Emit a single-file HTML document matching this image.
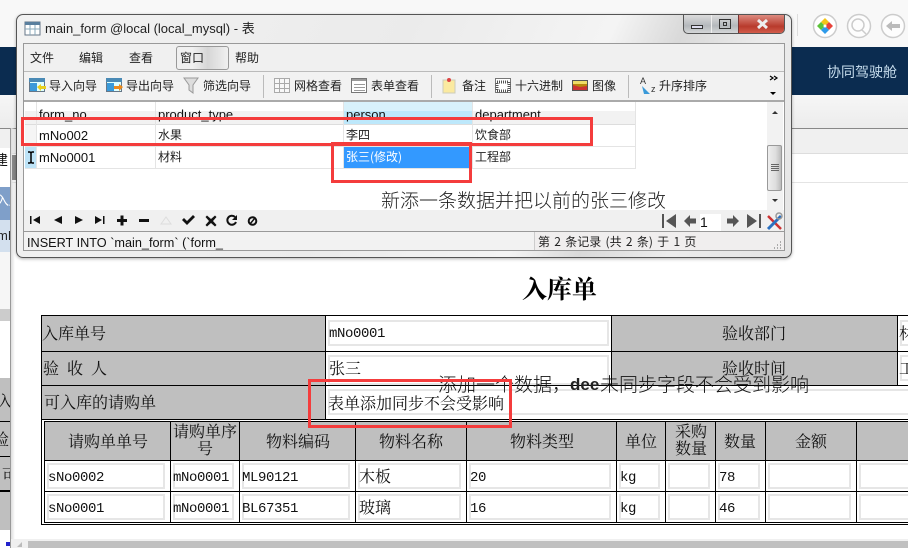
<!DOCTYPE html>
<html><head><meta charset="utf-8">
<style>
html,body{margin:0;padding:0;width:908px;height:548px;overflow:hidden;background:#fff}
*{box-sizing:border-box}
.a,.t,.m,.s,.g,.u,.i{position:absolute;white-space:nowrap}
.t{font:13px/16px "Liberation Sans","Noto Sans CJK SC",sans-serif;color:#111}
.u{font:12px/16px "Noto Sans CJK SC","Liberation Sans",sans-serif;color:#222}
.s{font:16px/20px "Liberation Serif","Noto Serif CJK SC",serif;color:#111}
.m{font:14px/20px "Liberation Mono",monospace;letter-spacing:-.4px;color:#111}
.g{background:#bfbfbf}
.i{border:2px solid #e6e6e6;background:#fff}
.k{position:absolute;background:#000}
.r{position:absolute;border:3px solid #f43c3c}
.c{text-align:center}
svg{position:absolute;overflow:visible}
</style></head><body>

<!-- backdrop -->
<div class="a" style="left:0;top:0;width:908px;height:47px;background:#f8f8f8"></div>
<div class="a" style="left:0;top:47px;width:908px;height:48px;background:#0b2c50"></div>
<div class="a" style="left:0;top:95px;width:908px;height:33px;background:linear-gradient(#f6f6f6,#ececec)"></div>
<div class="a" style="left:0;top:128px;width:908px;height:1px;background:#888"></div>
<div class="a" style="left:0;top:129px;width:908px;height:24px;background:#f0f0f0"></div>
<div class="a" style="left:0;top:153px;width:908px;height:1px;background:#ddd"></div>
<div class="a" style="left:0;top:182px;width:908px;height:1px;background:#e4e4e4"></div>
<div class="u" style="left:827px;top:62px;font-size:14px;line-height:20px;color:#c6dcec">协同驾驶舱</div>
<div class="a" style="left:797px;top:14px;width:1px;height:22px;background:#ddd"></div>
<svg style="left:0;top:0" width="908" height="60">
<circle cx="825" cy="26" r="11.500" fill="#fff" stroke="#ccc" stroke-width="1.500"/>
<path d="M825 18l4 4-4 4-4-4z" fill="#f5c518"/><path d="M829 22l4 4-4 4-4-4z" fill="#e8423a"/><path d="M821 22l4 4-4 4-4-4z" fill="#5cc43a"/><path d="M825 26l4 4-4 4-4-4z" fill="#2f9bea"/><circle cx="825" cy="26" r="1.500" fill="#fff"/>
<circle cx="859" cy="26" r="11.500" fill="#fdfdfd" stroke="#ccc" stroke-width="1.500"/><circle cx="858" cy="25" r="6" fill="none" stroke="#ccc" stroke-width="1.500"/><path d="M862 30l4 4" stroke="#ccc" stroke-width="1.500"/>
<circle cx="893" cy="26" r="11.500" fill="#fdfdfd" stroke="#ccc" stroke-width="1.500"/><path d="M886 26l6-5v3h8v4h-8v3z" fill="#bbb"/>
</svg>

<!-- left sliver -->
<div class="a" style="left:0;top:148px;width:11px;height:39px;background:#fff"></div>
<div class="u" style="left:-6px;top:150px;font-size:14px;line-height:20px;color:#111">建</div>
<div class="a" style="left:0;top:187px;width:11px;height:33px;background:#7f9fc9;overflow:hidden"><div class="u" style="left:-4px;top:5px;font-size:13px;color:#fff">入库</div></div>
<div class="a" style="left:0;top:220px;width:11px;height:32px;background:#d3e0ee;overflow:hidden"><div class="t" style="left:-3px;top:8px;color:#222">mN</div></div>
<div class="a" style="left:0;top:309px;width:11px;height:12px;background:#ccc"></div>
<div class="a" style="left:0;top:252px;width:11px;height:57px;background:#f6f6f6"></div>
<div class="g" style="left:0;top:378px;width:11px;height:112px"></div>
<div class="a" style="left:0;top:421px;width:11px;height:1px;background:#000"></div>
<div class="a" style="left:0;top:456px;width:11px;height:1px;background:#000"></div>
<div class="s" style="left:-3px;top:393px">入</div>
<div class="s" style="left:-7px;top:431px">验</div>
<div class="s" style="left:2px;top:467px">可</div>
<div class="a" style="left:0;top:490px;width:11px;height:2px;background:#000"></div>
<div class="g" style="left:0;top:492px;width:11px;height:38px"></div>
<div class="a" style="left:0;top:530px;width:11px;height:18px;background:#fff"></div>
<div class="a" style="left:6px;top:542px;width:5px;height:4px;background:#22c"></div>
<div class="a" style="left:10px;top:128px;width:1px;height:420px;background:#999"></div>
<div class="a" style="left:11px;top:183px;width:897px;height:365px;background:#fff"></div>
<div class="a" style="left:11px;top:128px;width:4px;height:420px;background:linear-gradient(90deg,#ddd,#fff0)"></div>
<div class="a" style="left:12px;top:155px;width:4px;height:25px;background:#888"></div>

<!-- bottom scrollbar -->
<div class="a" style="left:11px;top:539px;width:897px;height:9px;background:#f0f0f0"></div>
<div class="a" style="left:28px;top:541px;width:880px;height:7px;background:#c0c0c0"></div>
<svg style="left:0;top:0" width="30" height="548"><path d="M22 542l-5 5h5z" fill="#bbb"/></svg>

<!-- form -->
<div class="s" style="left:522px;top:277px;font-size:25px;line-height:28px;font-weight:bold;color:#000">入库单</div>
<div class="g" style="left:41px;top:315px;width:284px;height:104px"></div>
<div class="g" style="left:611px;top:315px;width:286px;height:70px"></div>
<div class="g" style="left:44px;top:421px;width:864px;height:39px"></div>

<div class="i" style="left:328px;top:320px;width:281px;height:26px"></div>
<div class="i" style="left:328px;top:355px;width:281px;height:30px"></div>
<div class="i" style="left:328px;top:389px;width:590px;height:26px"></div>
<div class="i" style="left:900px;top:320px;width:20px;height:26px"></div>
<div class="i" style="left:900px;top:355px;width:20px;height:26px"></div>
<div class="i" style="left:47px;top:463px;width:118px;height:26px"></div><div class="i" style="left:47px;top:494px;width:118px;height:26px"></div>
<div class="i" style="left:173px;top:463px;width:61px;height:26px"></div><div class="i" style="left:173px;top:494px;width:61px;height:26px"></div>
<div class="i" style="left:242px;top:463px;width:108px;height:26px"></div><div class="i" style="left:242px;top:494px;width:108px;height:26px"></div>
<div class="i" style="left:358px;top:463px;width:103px;height:26px"></div><div class="i" style="left:358px;top:494px;width:103px;height:26px"></div>
<div class="i" style="left:469px;top:463px;width:142px;height:26px"></div><div class="i" style="left:469px;top:494px;width:142px;height:26px"></div>
<div class="i" style="left:619px;top:463px;width:41px;height:26px"></div><div class="i" style="left:619px;top:494px;width:41px;height:26px"></div>
<div class="i" style="left:668px;top:463px;width:42px;height:26px"></div><div class="i" style="left:668px;top:494px;width:42px;height:26px"></div>
<div class="i" style="left:718px;top:463px;width:42px;height:26px"></div><div class="i" style="left:718px;top:494px;width:42px;height:26px"></div>
<div class="i" style="left:768px;top:463px;width:83px;height:26px"></div><div class="i" style="left:768px;top:494px;width:83px;height:26px"></div>
<div class="i" style="left:859px;top:463px;width:60px;height:26px"></div><div class="i" style="left:859px;top:494px;width:60px;height:26px"></div>

<!-- form lines -->
<div class="k" style="left:41px;top:315px;width:867px;height:1px"></div>
<div class="k" style="left:41px;top:351px;width:867px;height:1px"></div>
<div class="k" style="left:41px;top:385px;width:867px;height:1px"></div>
<div class="k" style="left:41px;top:419px;width:867px;height:1px"></div>
<div class="k" style="left:44px;top:421px;width:864px;height:1px"></div>
<div class="k" style="left:44px;top:460px;width:864px;height:1px"></div>
<div class="k" style="left:44px;top:491px;width:864px;height:1px"></div>
<div class="k" style="left:44px;top:522px;width:864px;height:1px"></div>
<div class="k" style="left:41px;top:524px;width:867px;height:1px"></div>
<div class="k" style="left:41px;top:315px;width:1px;height:210px"></div>
<div class="k" style="left:44px;top:421px;width:1px;height:102px"></div>
<div class="k" style="left:325px;top:315px;width:1px;height:104px"></div>
<div class="k" style="left:611px;top:315px;width:1px;height:70px"></div>
<div class="k" style="left:897px;top:315px;width:1px;height:70px"></div>
<div class="k" style="left:170px;top:421px;width:1px;height:102px"></div>
<div class="k" style="left:239px;top:421px;width:1px;height:102px"></div>
<div class="k" style="left:355px;top:421px;width:1px;height:102px"></div>
<div class="k" style="left:466px;top:421px;width:1px;height:102px"></div>
<div class="k" style="left:616px;top:421px;width:1px;height:102px"></div>
<div class="k" style="left:665px;top:421px;width:1px;height:102px"></div>
<div class="k" style="left:715px;top:421px;width:1px;height:102px"></div>
<div class="k" style="left:765px;top:421px;width:1px;height:102px"></div>
<div class="k" style="left:856px;top:421px;width:1px;height:102px"></div>

<!-- form text -->
<div class="s" style="left:42px;top:325px">入库单号</div>
<div class="s" style="left:43px;top:360px">验&nbsp;&nbsp;收&nbsp;&nbsp;人</div>
<div class="s" style="left:44px;top:394px">可入库的请购单</div>
<div class="m" style="left:329px;top:324px">mNo0001</div>
<div class="s" style="left:329px;top:360px">张三</div>
<div class="s" style="left:328px;top:395px">表单添加同步不会受影响</div>
<div class="s" style="left:722px;top:325px">验收部门</div>
<div class="s" style="left:722px;top:360px">验收时间</div>
<div class="s" style="left:899px;top:325px">材</div>
<div class="s" style="left:899px;top:360px">工</div>

<div class="s" style="left:68px;top:433px">请购单单号</div>
<div class="s" style="left:173px;top:424px;line-height:17px;width:64px;text-align:center;white-space:normal">请购单序号</div>
<div class="s" style="left:266px;top:433px">物料编码</div>
<div class="s" style="left:379px;top:433px">物料名称</div>
<div class="s" style="left:510px;top:433px">物料类型</div>
<div class="s" style="left:625px;top:433px">单位</div>
<div class="s" style="left:675px;top:424px;line-height:17px">采购<br>数量</div>
<div class="s" style="left:724px;top:433px">数量</div>
<div class="s" style="left:795px;top:433px">金额</div>

<div class="m" style="left:48px;top:468px">sNo0002</div><div class="m" style="left:48px;top:499px">sNo0001</div>
<div class="m" style="left:173px;top:468px">mNo0001</div><div class="m" style="left:173px;top:499px">mNo0001</div>
<div class="m" style="left:242px;top:468px">ML90121</div><div class="m" style="left:242px;top:499px">BL67351</div>
<div class="s" style="left:359px;top:468px">木板</div><div class="s" style="left:359px;top:499px">玻璃</div>
<div class="m" style="left:470px;top:468px">20</div><div class="m" style="left:470px;top:499px">16</div>
<div class="m" style="left:620px;top:468px">kg</div><div class="m" style="left:620px;top:499px">kg</div>
<div class="m" style="left:719px;top:468px">78</div><div class="m" style="left:719px;top:499px">46</div>

<div class="s" style="left:438px;top:373px;font-size:19px;line-height:22px;font-family:'Noto Sans CJK SC','Liberation Sans',sans-serif;font-weight:300">添加一个数据，</div>
<div class="t" style="left:570px;top:374px;font-size:17px;line-height:22px;font-weight:bold;color:#222">dee</div>
<div class="s" style="left:600px;top:373px;font-size:19px;line-height:22px;font-family:'Noto Sans CJK SC','Liberation Sans',sans-serif;font-weight:300">未同步字段不会受到影响</div>

<!-- window -->
<div class="a" style="left:16px;top:14px;width:776px;height:244px;border:1px solid #555;border-radius:7px;background:linear-gradient(115deg,#f2f2f2 0%,#ebebeb 45%,#f4f4f4 68%,#d9d9d9 76%,#ececec 86%,#e4e4e4 100%);box-shadow:0 1px 3px rgba(0,0,0,.3)"></div>
<svg style="left:0;top:0" width="60" height="40"><rect x="25" y="22" width="15" height="13" fill="#fff" stroke="#678"/><rect x="25" y="22" width="15" height="3" fill="#5a7f9e"/><path d="M25 29h15M30 25v10M35 25v10" stroke="#8ab"/></svg>
<div class="u" style="left:45px;top:21px;font-size:13px;line-height:16px;font-family:'Liberation Sans','Noto Sans CJK SC',sans-serif">main_form @local (local_mysql) - 表</div>

<!-- controls -->
<div class="a" style="left:683px;top:15px;width:102px;height:19px;border:1px solid #555;border-top:0;border-radius:0 0 5px 5px;background:linear-gradient(#dcdcdc,#b4b8bc 60%,#d4d6d8);overflow:hidden">
<div class="a" style="left:27px;top:0;width:1px;height:19px;background:#eee"></div>
<div class="a" style="left:54px;top:0;width:46px;height:19px;background:linear-gradient(#dd8b80,#b83a2c 60%,#d6614f);border-left:1px solid #733"></div>
</div>
<div class="a" style="left:691px;top:25px;width:12px;height:4px;border:1px solid #333;background:#dde"></div>
<div class="a" style="left:719px;top:19px;width:12px;height:10px;border:1px solid #333"><div class="a" style="left:3px;top:2px;width:4px;height:4px;border:1px solid #333"></div></div>
<svg style="left:0;top:0" width="800" height="40"><path d="M758 20l9 8M767 20l-9 8" stroke="#eee" stroke-width="3"/></svg>

<!-- client -->
<div class="a" style="left:23px;top:43px;width:762px;height:208px;border:1px solid #999;background:#f0f0f0"></div>
<div class="a" style="left:24px;top:71px;width:760px;height:1px;background:#bbb"></div>
<div class="a" style="left:24px;top:72px;width:760px;height:28px;background:#f2f2f2"></div>
<div class="a" style="left:24px;top:100px;width:760px;height:2px;background:#aaa"></div>

<div class="u" style="left:30px;top:50px">文件</div>
<div class="u" style="left:79px;top:50px">编辑</div>
<div class="u" style="left:129px;top:50px">查看</div>
<div class="a" style="left:176px;top:46px;width:53px;height:24px;border:1px solid #999;border-radius:3px;background:linear-gradient(90deg,#f0f0f0 30%,#d6d6d6 60%,#f0f0f0)"></div>
<div class="u" style="left:180px;top:50px">窗口</div>
<div class="u" style="left:235px;top:50px">帮助</div>

<div class="u" style="left:49px;top:78px">导入向导</div>
<div class="u" style="left:126px;top:78px">导出向导</div>
<div class="u" style="left:203px;top:78px">筛选向导</div>
<div class="u" style="left:294px;top:78px">网格查看</div>
<div class="u" style="left:371px;top:78px">表单查看</div>
<div class="u" style="left:462px;top:78px">备注</div>
<div class="u" style="left:515px;top:78px">十六进制</div>
<div class="u" style="left:592px;top:78px">图像</div>
<div class="u" style="left:659px;top:78px">升序排序</div>
<div class="a" style="left:263px;top:75px;width:1px;height:23px;background:#bbb"></div>
<div class="a" style="left:431px;top:75px;width:1px;height:23px;background:#bbb"></div>
<div class="a" style="left:628px;top:75px;width:1px;height:23px;background:#bbb"></div>
<svg style="left:0;top:0" width="800" height="102">
<rect x="29.500" y="78.500" width="15" height="13" fill="#dff" stroke="#678"/><rect x="29" y="78" width="16" height="4" fill="#4a8ab5"/><rect x="30" y="83" width="7" height="8" fill="#3a9ad9"/><path d="M37 87l4-3v2h5v3h-5v2z" fill="#e8d020"/>
<rect x="106.500" y="78.500" width="15" height="13" fill="#dff" stroke="#678"/><rect x="106" y="78" width="16" height="4" fill="#4a8ab5"/><rect x="107" y="83" width="7" height="8" fill="#3a9ad9"/><path d="M123 87l-4-3v2h-5v3h5v2z" fill="#ec8a1c"/>
<path d="M184 78h14l-5 7v8l-4-3v-5z" fill="#ddd" stroke="#999"/>
<path d="M274.500 78.500h15v14h-15zM279.500 78.500v14M284.500 78.500v14M274.500 83.500h15M274.500 88.500h15" fill="#f8f8f8" stroke="#aaa"/>
<rect x="351.500" y="78.500" width="15" height="14" fill="#fff" stroke="#777"/><rect x="352" y="79" width="14" height="2" fill="#999"/><path d="M354 84.500h11M354 87.500h11M354 90.500h11" stroke="#999"/>
<path d="M443 80h12v13h-12z" fill="#fbeaa0" stroke="#ccb"/><circle cx="449" cy="80" r="2" fill="#d44"/>
<rect x="495.500" y="78.500" width="15" height="14" fill="#fff" stroke="#777"/><rect x="497" y="82" width="12" height="9" fill="#fff" stroke="#555" stroke-dasharray="1 1" stroke-width="3"/>
<rect x="572.500" y="80.500" width="15" height="10" fill="#eedd66" stroke="#555"/><path d="M573 84h14v6h-14z" fill="#b8860b"/><path d="M573 85l7 2 7-1v4h-14z" fill="#c33"/>
<text x="640" y="84" font-family="Liberation Sans" font-size="9" fill="#333">A</text><text x="651" y="92" font-family="Liberation Sans" font-size="9" fill="#333">z</text><path d="M642 86l8 8h-6z" fill="#3a9ad9"/>
<path d="M770 76l3 2-3 2M774 76l3 2-3 2" fill="none" stroke="#000" stroke-width="1.200"/><path d="M770 92h6l-3 3z" fill="#000"/>
</svg>

<!-- grid -->
<div class="a" style="left:24px;top:102px;width:760px;height:108px;background:#fff"></div>
<div class="a" style="left:25px;top:111px;width:611px;height:13px;background:#f2f2f2"></div>
<div class="a" style="left:344px;top:102px;width:128px;height:9px;background:#d8f1fb"></div>
<div class="a" style="left:344px;top:111px;width:128px;height:13px;background:#bde8fb"></div>
<div class="a" style="left:25px;top:125px;width:11px;height:21px;background:#f5f5f5"></div>
<div class="a" style="left:25px;top:147px;width:11px;height:21px;background:#bde3f7"></div>
<div class="a" style="left:344px;top:147px;width:128px;height:21px;background:#3399ff"></div>
<div class="a" style="left:25px;top:124px;width:611px;height:1px;background:#ddd"></div>
<div class="a" style="left:25px;top:146px;width:611px;height:1px;background:#e4e4e4"></div>
<div class="a" style="left:25px;top:168px;width:611px;height:1px;background:#e4e4e4"></div>
<div class="a" style="left:36px;top:102px;width:1px;height:67px;background:#e4e4e4"></div>
<div class="a" style="left:155px;top:102px;width:1px;height:67px;background:#e4e4e4"></div>
<div class="a" style="left:343px;top:102px;width:1px;height:67px;background:#e4e4e4"></div>
<div class="a" style="left:472px;top:102px;width:1px;height:67px;background:#e4e4e4"></div>
<div class="a" style="left:635px;top:102px;width:1px;height:67px;background:#e4e4e4"></div>
<div class="t" style="left:39px;top:107px">form_no</div>
<div class="t" style="left:158px;top:107px">product_type</div>
<div class="t" style="left:346px;top:107px">person</div>
<div class="t" style="left:475px;top:107px">department</div>
<div class="t" style="left:39px;top:128px">mNo002</div>
<div class="u" style="left:158px;top:127px">水果</div>
<div class="u" style="left:346px;top:127px">李四</div>
<div class="u" style="left:475px;top:127px">饮食部</div>
<div class="t" style="left:39px;top:150px">mNo0001</div>
<div class="u" style="left:158px;top:149px">材料</div>
<div class="u" style="left:346px;top:149px;color:#fff">张三(修改)</div>
<div class="u" style="left:475px;top:149px">工程部</div>
<svg style="left:0;top:0" width="40" height="170"><path d="M28 152h2l1 1 1-1h2M31 153v9M28 163h2l1-1 1 1h2" fill="none" stroke="#000" stroke-width="1.500"/></svg>

<div class="a" style="left:767px;top:102px;width:16px;height:108px;background:#f2f2f2"></div>
<div class="a" style="left:767px;top:145px;width:15px;height:46px;border:1px solid #999;border-radius:2px;background:linear-gradient(90deg,#eee,#ddd 60%,#bbb)"></div>
<svg style="left:0;top:0" width="800" height="210"><path d="M772 114l3-3 3 3z" fill="#333"/><path d="M772 199h6l-3 3z" fill="#333"/><path d="M771 164.500h8M771 166.500h8M771 168.500h8M771 170.500h8" stroke="#666"/></svg>

<div class="s" style="left:381px;top:189px;font-size:19px;line-height:22px;font-family:'Noto Sans CJK SC','Liberation Sans',sans-serif;font-weight:300;color:#222">新添一条数据并把以前的张三修改</div>

<!-- bottom nav -->
<div class="a" style="left:24px;top:210px;width:760px;height:21px;background:#f0f0f0"></div>
<div class="a" style="left:24px;top:231px;width:760px;height:1px;background:#999"></div>
<svg style="left:0;top:0" width="800" height="232">
<g fill="#111">
<path d="M30 216h1.500v8H30zM40 216v8l-7-4z"/>
<path d="M62 216v8l-8-4z"/>
<path d="M75 216v8l8-4z"/>
<path d="M95 216v8l7-4zM103 216h1.500v8H103z"/>
<path d="M120.500 215.500h3v3.500h3.500v3h-3.500v3.500h-3v-3.500H117v-3h3.500z"/>
<rect x="139" y="219" width="10" height="3"/>
<path d="M182 220l2-2 3 3 6-6 2 2-8 8z"/>
<path d="M207 215.500l4 3.500 4-3.500 1.500 1.500-3.500 4 3.500 4-1.500 1.500-4-3.500-4 3.500-1.500-1.500 3.500-4-3.500-4z"/>
</g>
<path d="M161 224l5-7 5 7z" fill="none" stroke="#ddd"/>
<path d="M236 222a4.500 4.500 0 1 1-1-5" fill="none" stroke="#111" stroke-width="2"/><path d="M237 215v5h-5z" fill="#111"/>
<circle cx="252.500" cy="221" r="3.800" fill="none" stroke="#111" stroke-width="2"/><path d="M250 224l5-6" stroke="#111" stroke-width="1.500"/>
<g fill="#555">
<path d="M662 214h2v14h-2zM676 214v14l-10-7z"/>
<path d="M684 221l6-6v3.500h6v5h-6v3.500z"/>
<path d="M739 221l-6-6v3.500h-6v5h6v3.500z"/>
<path d="M747 214l10 7-10 7zM759 214h2v14h-2z"/>
</g>
<path d="M768 216l13 13" stroke="#c33" stroke-width="2.500"/><path d="M781 216l-13 13" stroke="#2a6fc0" stroke-width="3"/><circle cx="779" cy="216" r="3" fill="none" stroke="#999" stroke-width="1.500"/>
</svg>
<div class="a" style="left:700px;top:214px;width:21px;height:17px;background:#fff"></div>
<div class="t" style="left:700px;top:214px;font-size:14px">1</div>

<!-- status -->
<div class="a" style="left:24px;top:232px;width:510px;height:18px;background:#f2f2f2"></div>
<div class="a" style="left:534px;top:232px;width:250px;height:18px;background:#f0eeee;border-left:1px solid #ccc"></div>
<div class="t" style="left:27px;top:235px;font-size:12.700px">INSERT INTO `main_form` (`form_</div>
<div class="u" style="left:538px;top:234px;word-spacing:1.600px">第 2 条记录 (共 2 条) 于 1 页</div>
<svg style="left:0;top:0" width="800" height="252"><path d="M780 242h1M777 245h1M780 245h1M774 248h1M777 248h1M780 248h1" stroke="#aaa" stroke-width="2"/></svg>

<!-- red boxes -->
<div class="r" style="left:21px;top:117px;width:572px;height:29px"></div>
<div class="r" style="left:331px;top:142px;width:141px;height:41px"></div>
<div class="r" style="left:308px;top:379px;width:204px;height:49px"></div>
</body></html>
